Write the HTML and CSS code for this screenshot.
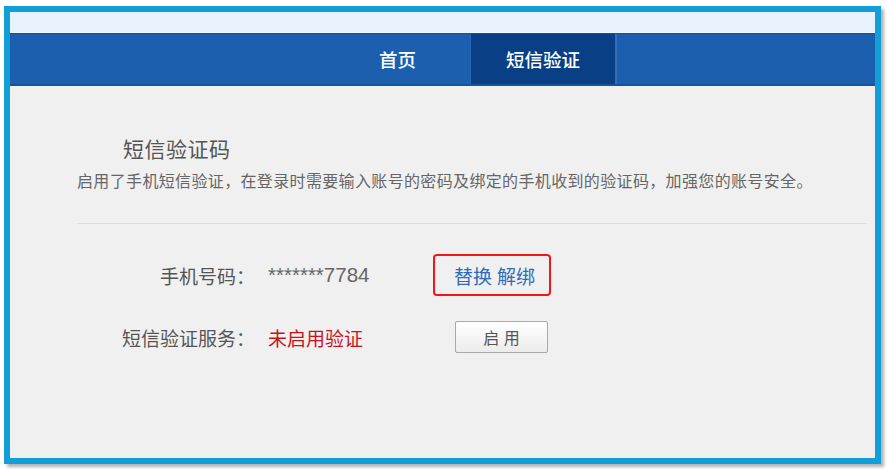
FILE: index.html
```html
<!DOCTYPE html>
<html lang="zh-CN">
<head>
<meta charset="utf-8">
<title>短信验证</title>
<link rel="stylesheet" href="styles.css">
</head>
<body>
<div class="frame">
  <div class="topstrip"></div>
  <nav class="nav">
    <a class="nav-item">首页</a>
    <a class="nav-item active">短信验证</a>
  </nav>
  <main class="content">
    <h1 class="title">短信验证码</h1>
    <p class="desc">启用了手机短信验证，在登录时需要输入账号的密码及绑定的手机收到的验证码，加强您的账号安全。</p>
    <div class="rows">
      <div class="row">
        <span class="label">手机号码：</span>
        <span class="value phone">*******7784</span>
        <span class="links"><a class="link">替换</a> <a class="link">解绑</a></span>
      </div>
      <div class="row">
        <span class="label">短信验证服务：</span>
        <span class="value off">未启用验证</span>
        <span class="action"><button class="btn">启 用</button></span>
      </div>
    </div>
  </main>
</div>
</body>
</html>
```

FILE: styles.css
```css
html, body {
  margin: 0;
  padding: 0;
  background: #ffffff;
}
body {
  font-family: "Liberation Sans", "Noto Sans CJK SC", sans-serif;
  width: 887px;
  height: 469px;
  overflow: hidden;
}
.frame {
  box-sizing: border-box;
  margin: 6px 0 0 4px;
  width: 877px;
  height: 458px;
  border: 6px solid #129fd8;
  background: #f0f0f0;
  box-shadow: 3px 3px 3px rgba(0, 0, 0, 0.3);
  display: flex;
  flex-direction: column;
}
.topstrip {
  height: 20px;
  background: #e8f2fd;
  border-bottom: 1px solid #f4f8fe;
}
.nav {
  display: flex;
  height: 50px;
  background: #1c5fae;
  border-top: 1px solid #16509a;
  border-bottom: 2px solid #17529c;
  padding-left: 315px;
}
.nav-item {
  box-sizing: border-box;
  width: 145px;
  display: flex;
  align-items: center;
  justify-content: center;
  color: #ffffff;
  font-size: 18.5px;
  font-weight: 500;
}
.nav-item.active {
  background: #083f85;
  border-left: 1px solid #2766b2;
  box-shadow: 2px 0 0 #3470ba;
}
.content {
  padding: 49px 8px 0 67px;
  color: #555;
}
.title {
  margin: 0 0 0 46px;
  font-size: 21px;
  font-weight: normal;
  letter-spacing: 0.5px;
  color: #555;
  line-height: 30px;
}
.desc {
  margin: 2px 0 0 0;
  font-size: 16px;
  letter-spacing: 0.35px;
  line-height: 30px;
  color: #666;
  padding-bottom: 26px;
  border-bottom: 1px solid #dcdcdc;
}
.rows {
  padding-top: 30px;
  display: flex;
  flex-direction: column;
  gap: 20px;
}
.row {
  display: flex;
  align-items: center;
  height: 42px;
  font-size: 19px;
}
.label {
  width: 178px;
  text-align: right;
  color: #555;
}
.value {
  width: 178px;
  padding-left: 13px;
  box-sizing: border-box;
  color: #666;
}
.value.phone {
  font-size: 20.5px;
}
.value.off {
  color: #c8121c;
}
.links {
  box-sizing: border-box;
  height: 42px;
  display: flex;
  align-items: center;
  gap: 5px;
  padding: 0 14px 0 19px;
  border: 2px solid #f5141a;
  border-radius: 4px;
}
.link {
  color: #2c6cba;
}
.action {
  padding-left: 22px;
}
.btn {
  width: 93px;
  height: 32px;
  border: 1px solid #a8a8a8;
  border-radius: 2px;
  background: linear-gradient(#ffffff, #ececec);
  font-family: "Liberation Sans", "Noto Sans CJK SC", sans-serif;
  font-size: 16px;
  color: #555;
  padding: 0;
}
```
